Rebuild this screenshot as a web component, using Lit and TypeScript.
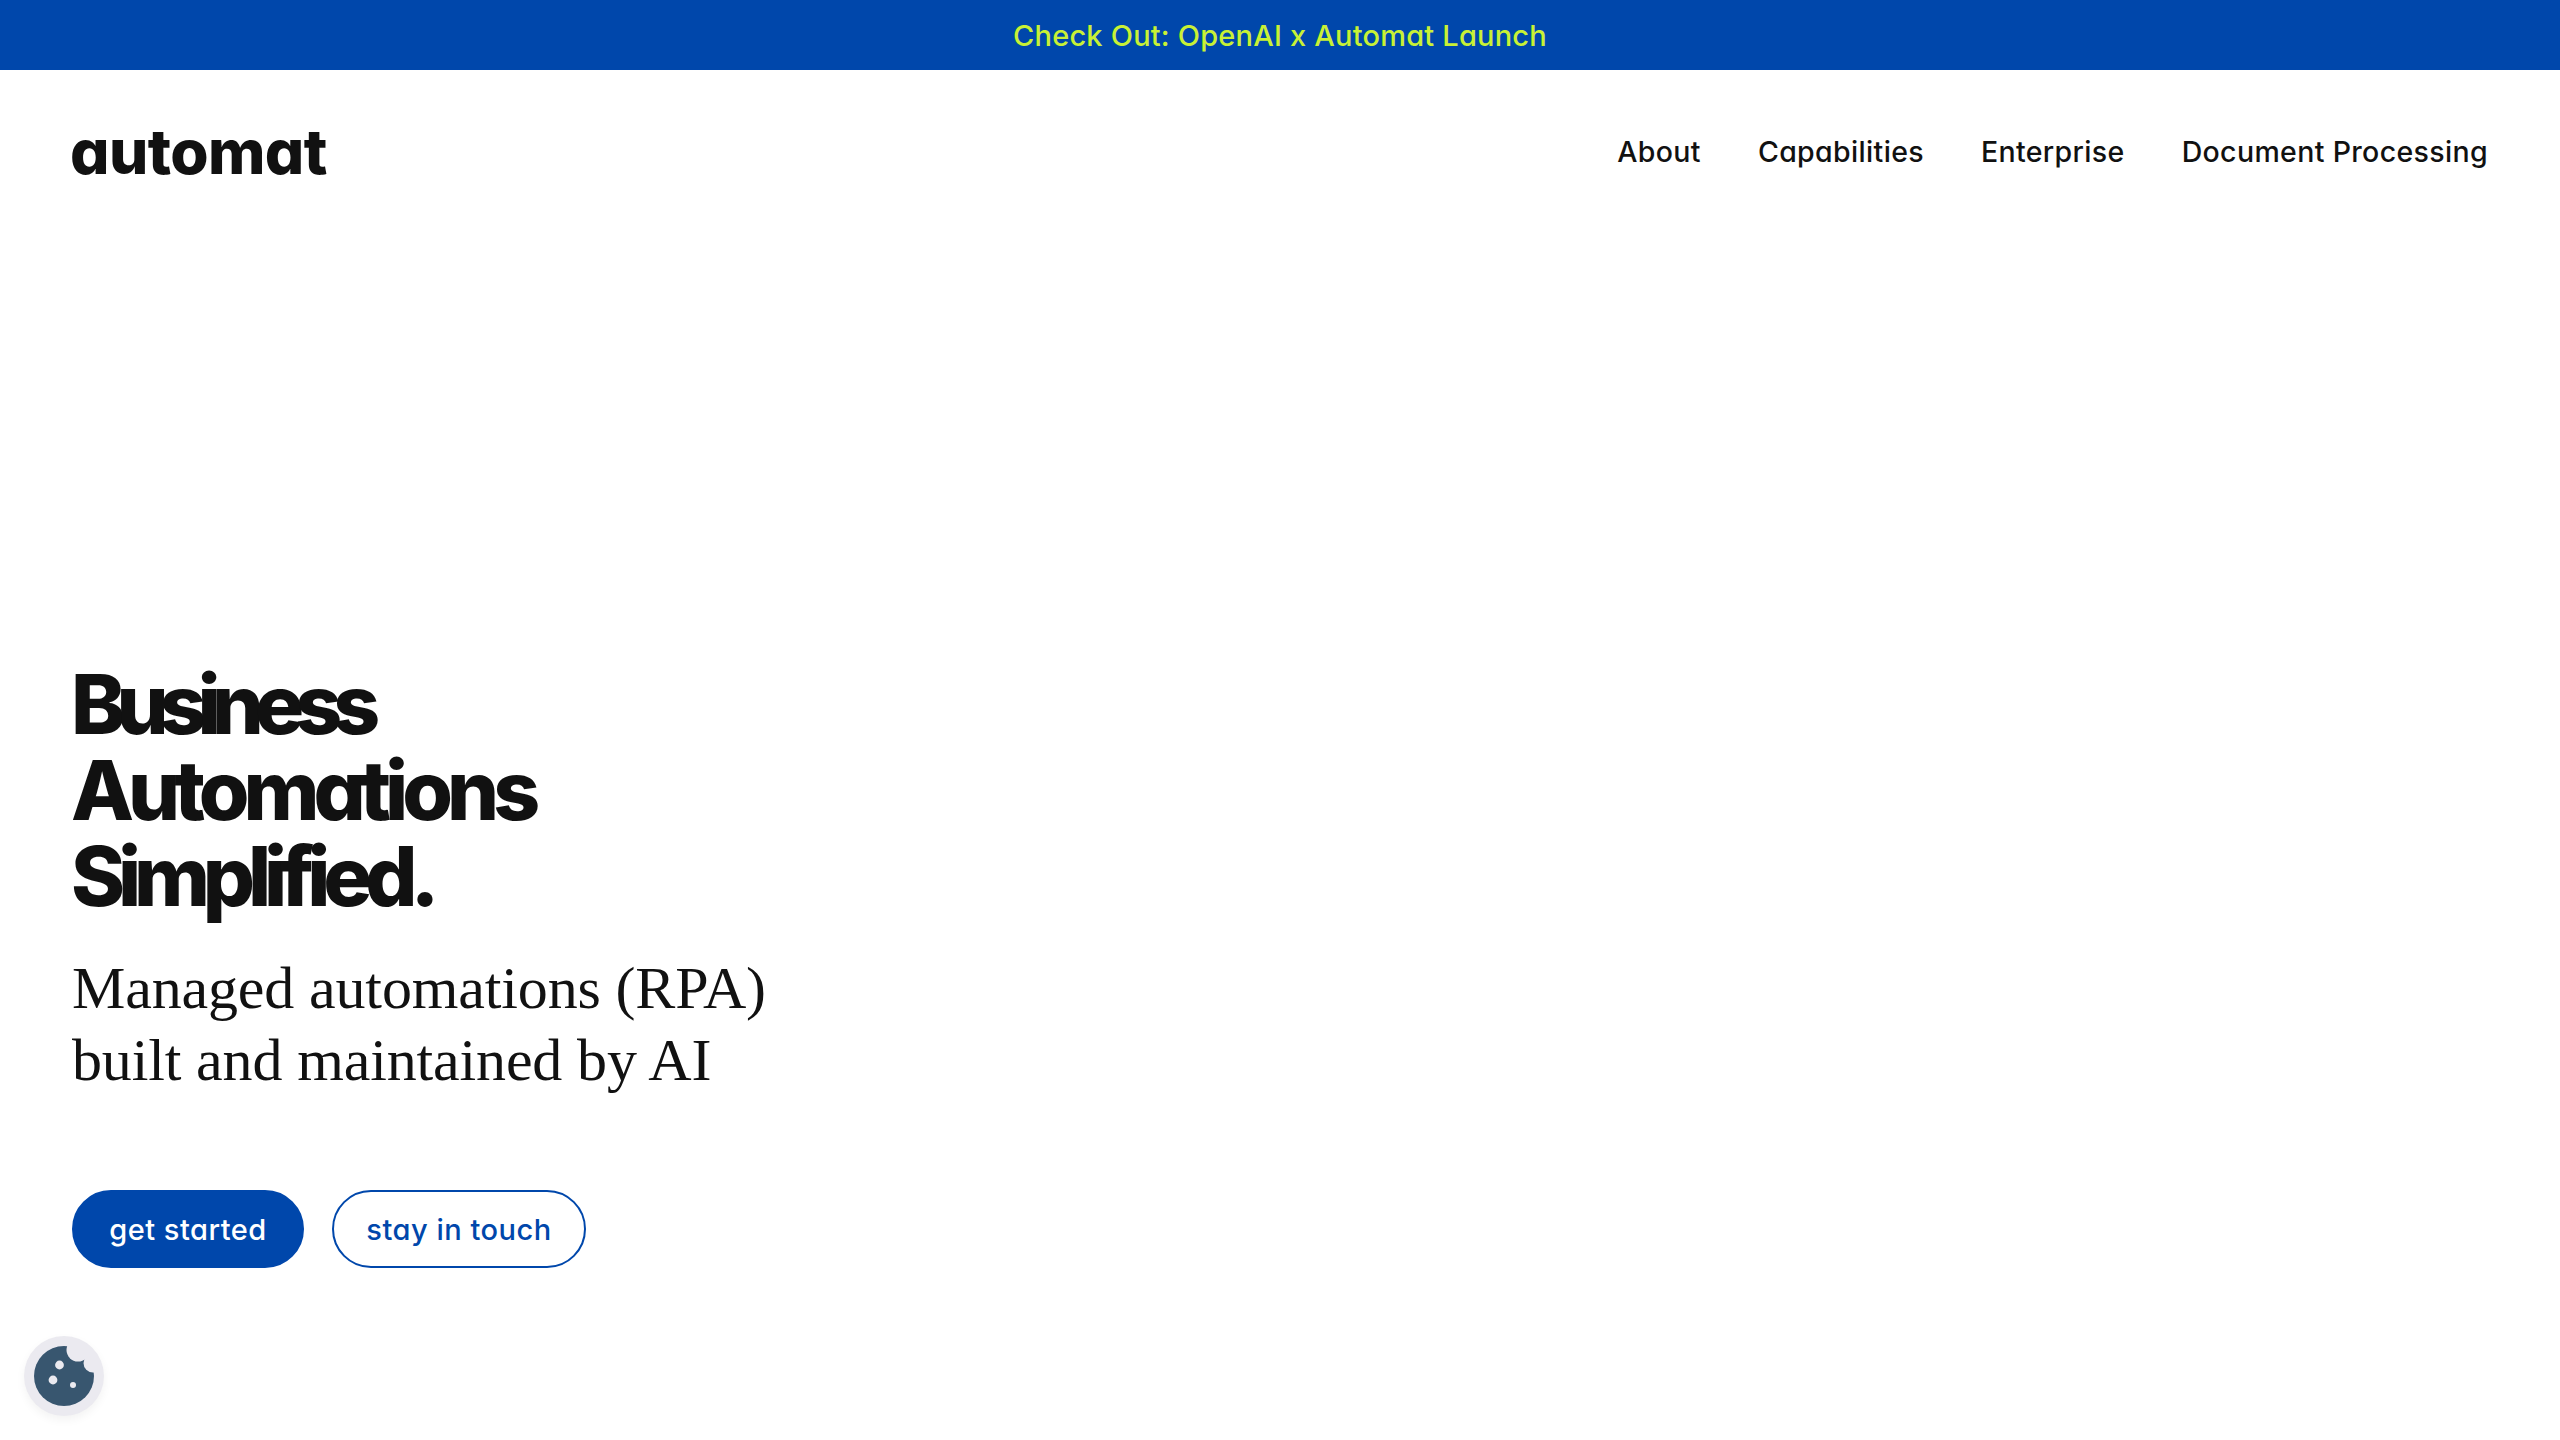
import { LitElement, html, css } from "lit";
import { customElement } from "lit/decorators.js";

@customElement("app-root")
export class AppRoot extends LitElement {
  static styles = css`
    :host {
      display: block;
      position: relative;
      height: 1440px;
      background: #fff;
      color: #111;
      font-family: Inter, "Noto Sans", sans-serif;
      font-feature-settings: "cv11" 1;
      overflow: hidden;
    }
    .banner {
      height: 70px;
      background: #0047ab;
      color: #c8f135;
      display: flex;
      align-items: center;
      justify-content: center;
      font-size: 29px;
      font-weight: 500;
      letter-spacing: 0.2px;
    }
    .header {
      height: 164px;
      padding: 0 72px 0 70px;
      display: flex;
      align-items: center;
      justify-content: space-between;
    }
    .logo {
      font-size: 62px;
      font-weight: 800;
      letter-spacing: -0.01em;
      line-height: 1;
    }
    .nav {
      display: flex;
      gap: 57px;
      font-size: 28.5px;
      font-weight: 500;
      letter-spacing: 0.35px;
      line-height: 32px;
      margin-top: -1px;
    }
    .hero {
      padding: 428px 72px 0;
    }
    h1 {
      margin: 0 0 0 -1px;
      font-size: 82px;
      line-height: 86px;
      font-weight: 800;
    }
    h1 span {
      display: block;
    }
    .l1 {
      letter-spacing: -9px;
    }
    .l2 {
      letter-spacing: -6px;
    }
    .l3 {
      letter-spacing: -7.2px;
    }
    .sub {
      margin: 32px 0 0;
      font-family: "Liberation Serif", serif;
      font-size: 60px;
      line-height: 72px;
      letter-spacing: -0.15px;
      font-feature-settings: normal;
    }
    .actions {
      display: flex;
      gap: 28px;
      margin-top: 94px;
    }
    .btn {
      box-sizing: border-box;
      height: 78px;
      border-radius: 39px;
      border: 2px solid #0047ab;
      display: flex;
      align-items: center;
      justify-content: center;
      font-size: 29px;
      font-weight: 500;
      letter-spacing: 0.5px;
    }
    .primary {
      width: 232px;
      background: #0047ab;
      color: #fff;
    }
    .secondary {
      width: 254px;
      background: #fff;
      color: #0047ab;
    }
    .cookie {
      position: absolute;
      left: 24px;
      top: 1336px;
      width: 80px;
      height: 80px;
      border-radius: 50%;
      background: #ebeaf0;
      box-shadow: 0 4px 10px rgba(0, 0, 0, 0.05);
      display: flex;
      align-items: center;
      justify-content: center;
    }
    .cookie svg {
      display: block;
    }
  `;

  render() {
    return html`
      <div class="banner">Check Out: OpenAI x Automat Launch</div>
      <header class="header">
        <div class="logo">automat</div>
        <nav class="nav">
          <span>About</span><span>Capabilities</span><span>Enterprise</span><span>Document Processing</span>
        </nav>
      </header>
      <main class="hero">
        <h1><span class="l1">Business</span><span class="l2">Automations</span><span class="l3">Simplified.</span></h1>
        <p class="sub">Managed automations (RPA)<br />built and maintained by AI</p>
        <div class="actions">
          <div class="btn primary">get started</div>
          <div class="btn secondary">stay in touch</div>
        </div>
      </main>
      <div class="cookie">
        <svg width="60" height="60" viewBox="0 0 60 60">
          <circle cx="30" cy="30" r="30" fill="#38566f" />
          <circle cx="44" cy="4" r="11.5" fill="#ebeaf0" />
          <circle cx="59" cy="17" r="9.5" fill="#ebeaf0" />
          <circle cx="25.5" cy="19" r="4.4" fill="#ebeaf0" />
          <circle cx="19" cy="34" r="4.4" fill="#ebeaf0" />
          <circle cx="39" cy="39" r="3" fill="#ebeaf0" />
        </svg>
      </div>
    `;
  }
}
